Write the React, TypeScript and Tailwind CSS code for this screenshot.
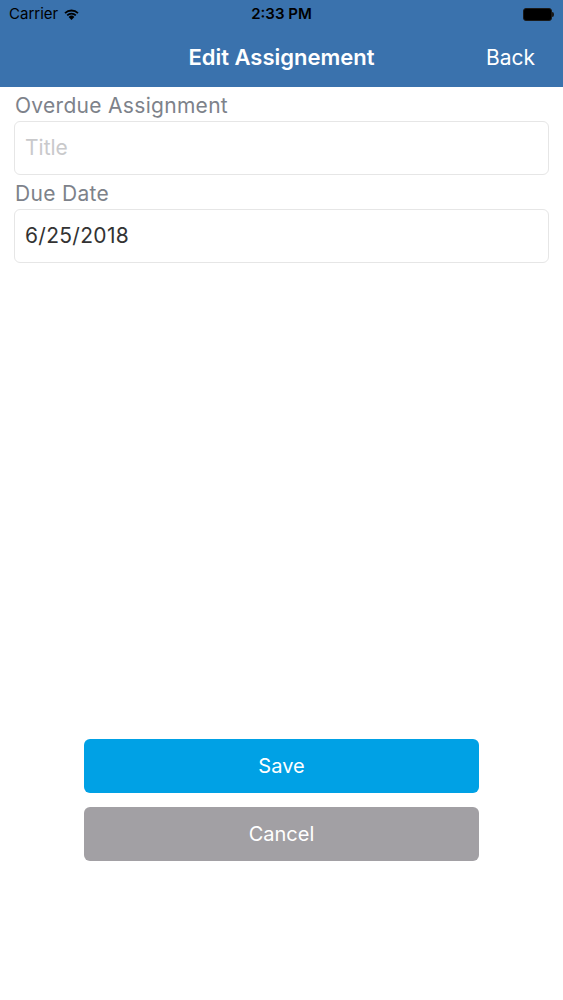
export default function App() {
  return (
    <div className="min-h-screen w-full bg-white flex flex-col font-['Inter','Liberation_Sans',sans-serif]">
      {/* Status + nav bar */}
      <div className="bg-[#3a72ad] h-[87px] flex flex-col">
        <div className="h-[28px] flex items-center justify-between px-[9px] text-[15px] text-black">
          <div className="flex items-center gap-[5px] w-[120px]">
            <span>Carrier</span>
            <svg width="17" height="12" viewBox="0 0 17 12">
              <path d="M8.5 12 L5.6 8.9 A4.2 4.2 0 0 1 11.4 8.9 Z" fill="#000" />
              <path d="M3.6 6.8 A7 7 0 0 1 13.4 6.8 L12.2 8.1 A5.3 5.3 0 0 0 4.8 8.1 Z" fill="#000" />
              <path d="M1.4 4.5 A10.2 10.2 0 0 1 15.6 4.5 L14.4 5.8 A8.5 8.5 0 0 0 2.6 5.8 Z" fill="#000" />
            </svg>
          </div>
          <span className="font-semibold">2:33 PM</span>
          <div className="w-[120px] flex justify-end items-center">
            <div className="w-[29px] h-[13px] rounded-[3px] border border-[#1a1a1a] bg-black" />
            <div className="w-[2px] h-[5px] bg-[#1a1a1a] rounded-r-sm" />
          </div>
        </div>
        <div className="flex-1 flex items-center justify-between px-[28px] text-white text-[21px]">
          <span className="w-[60px]" />
          <span className="font-semibold text-[22px]">Edit Assignement</span>
          <span className="w-[60px] text-right">Back</span>
        </div>
      </div>

      {/* Form */}
      <div className="px-[14px] pt-[5px] flex flex-col">
        <label className="text-[21px] text-[#7d828a] leading-[28px] pl-[1px] tracking-[0.3px]">Overdue Assignment</label>
        <div className="mt-[1px] h-[54px] rounded-[6px] border border-[#e6e6e6] flex items-center px-[10px] text-[21px] text-[#c9c9cb]">
          Title
        </div>
        <label className="mt-[5px] text-[21px] text-[#7d828a] leading-[28px] pl-[1px] tracking-[0.3px]">Due Date</label>
        <div className="mt-[1px] h-[54px] rounded-[6px] border border-[#e6e6e6] flex items-center px-[10px] text-[21px] text-[#333] tracking-[0.3px]">
          6/25/2018
        </div>
      </div>

      {/* Buttons */}
      <div className="mt-[476px] px-[84px] flex flex-col gap-[14px]">
        <button className="h-[54px] w-full rounded-[6px] bg-[#00a1e5] text-white text-[20px]">Save</button>
        <button className="h-[54px] w-full rounded-[6px] bg-[#a2a0a4] text-white text-[20px]">Cancel</button>
      </div>
    </div>
  );
}
